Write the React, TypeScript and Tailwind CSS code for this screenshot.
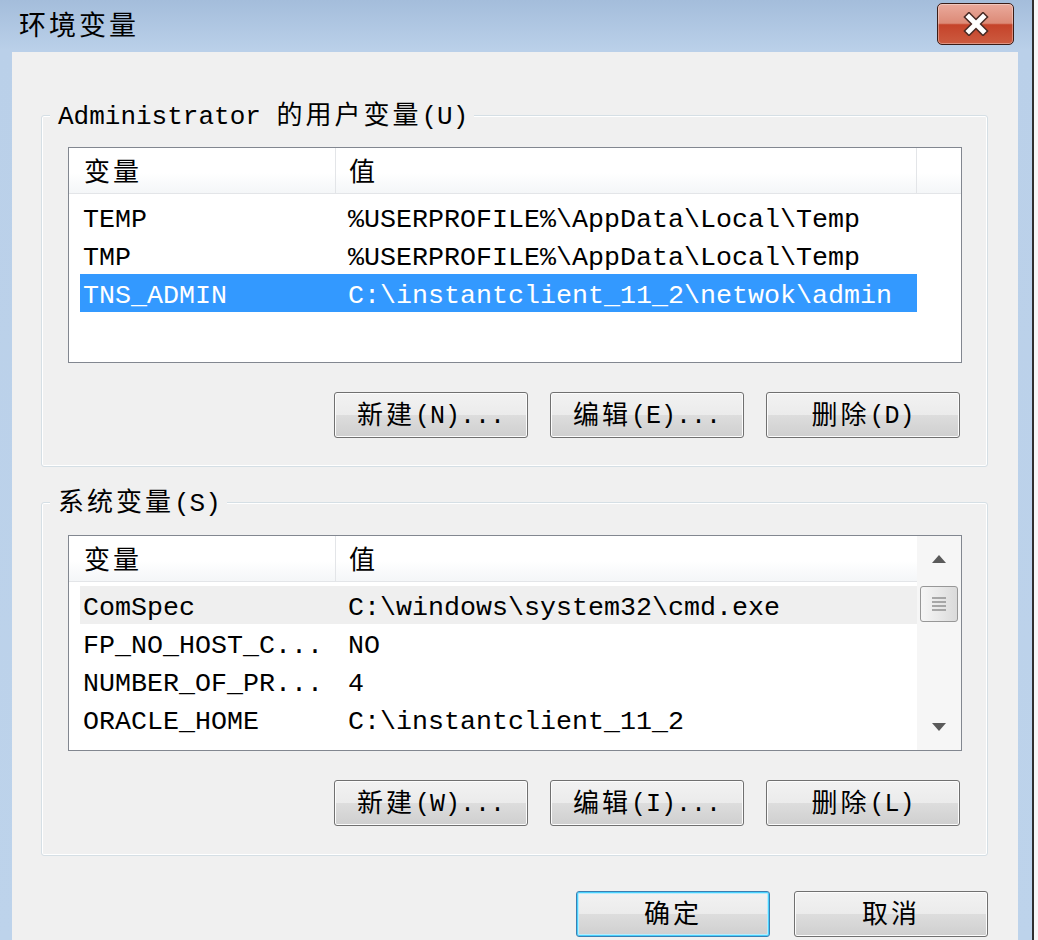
import React from "react";

type Row = { name: string; value: string; state?: "selected" | "hover" };

const userVars: Row[] = [
  { name: "TEMP", value: "%USERPROFILE%\\AppData\\Local\\Temp" },
  { name: "TMP", value: "%USERPROFILE%\\AppData\\Local\\Temp" },
  { name: "TNS_ADMIN", value: "C:\\instantclient_11_2\\netwok\\admin", state: "selected" },
];

const systemVars: Row[] = [
  { name: "ComSpec", value: "C:\\windows\\system32\\cmd.exe", state: "hover" },
  { name: "FP_NO_HOST_C...", value: "NO" },
  { name: "NUMBER_OF_PR...", value: "4" },
  { name: "ORACLE_HOME", value: "C:\\instantclient_11_2" },
];

// SimSun-style spacing: CJK glyphs take roughly two Latin cells
const CJK = /([\u3400-\u9fff]+)/;
function Mixed({ text, cjk = "text-[26px] tracking-[3px]" }: { text: string; cjk?: string }) {
  return (
    <>
      {text.split(CJK).map((part, i) =>
        i % 2 === 1 ? (
          <span key={i} className={cjk}>
            {part}
          </span>
        ) : (
          part
        ),
      )}
    </>
  );
}

function Button({ label, isDefault }: { label: string; isDefault?: boolean }) {
  return (
    <button
      className={
        isDefault
          ? "w-[194px] h-[46px] rounded-[3px] border border-[#3c7fb1] bg-[linear-gradient(#f2f2f2,#ebebeb_50%,#dddddd_50%,#cfcfcf)] shadow-[inset_0_0_0_1px_#48d1fd,inset_0_0_0_2px_#b9ecfd] flex items-center justify-center pt-[3px] text-black text-[25px] leading-[32px]"
          : "w-[194px] h-[46px] rounded-[3px] border border-[#707070] bg-[linear-gradient(#f2f2f2,#ebebeb_50%,#dddddd_50%,#cfcfcf)] shadow-[inset_0_0_0_1px_#fcfcfc] flex items-center justify-center pt-[3px] text-black text-[25px] leading-[32px]"
      }
    >
      <Mixed text={label} />
    </button>
  );
}

function Triangle({ down }: { down?: boolean }) {
  return (
    <svg width="14" height="8" viewBox="0 0 14 8">
      <polygon points={down ? "0,0 14,0 7,8" : "0,8 14,8 7,0"} fill="#5a5a5a" />
    </svg>
  );
}

function Scrollbar() {
  return (
    <div className="w-[44px] flex flex-col bg-[#f6f6f6]">
      <div className="h-[46px] flex items-center justify-center">
        <Triangle />
      </div>
      <div className="mx-[3px] mt-[4px] h-[36px] rounded-[3px] border border-[#979797] bg-[linear-gradient(90deg,#f6f6f6,#e9e9e9_50%,#dadada)] flex items-center justify-center">
        <svg width="16" height="16" viewBox="0 0 16 16">
          {[2, 6, 10, 14].map((y) => (
            <line key={y} x1="1" y1={y} x2="15" y2={y} stroke="#8a8a8a" strokeWidth="1.4" />
          ))}
        </svg>
      </div>
      <div className="flex-1" />
      <div className="h-[46px] flex items-center justify-center">
        <Triangle down />
      </div>
    </div>
  );
}

function VarList({ rows, scroll }: { rows: Row[]; scroll?: boolean }) {
  return (
    <div className="h-[216px] border border-[#828790] bg-white flex">
      <div className="flex-1 flex flex-col">
        <div className="h-[46px] flex border-b border-[#e3e5e8] bg-[linear-gradient(#ffffff,#ffffff_55%,#f4f6f8)] leading-[32px]">
          <div className="w-[267px] pl-[15px] pt-[7px] flex items-center border-r border-[#e3e5e8]">
            <Mixed text="变量" />
          </div>
          <div
            className={
              scroll
                ? "flex-1 pl-[13px] pt-[7px] flex items-center"
                : "w-[581px] pl-[13px] pt-[7px] flex items-center border-r border-[#e3e5e8]"
            }
          >
            <Mixed text="值" />
          </div>
          {!scroll && <div className="flex-1" />}
        </div>
        <div className="pt-[4px] pl-[11px]">
          {rows.map((r) => (
            <div
              key={r.name}
              className={
                r.state === "selected"
                  ? "w-[837px] h-[38px] pl-[3px] pt-[5px] flex items-center bg-[#3399ff] text-white"
                  : r.state === "hover"
                    ? "w-[837px] h-[38px] pl-[3px] pt-[5px] flex items-center bg-[#efefef]"
                    : "w-[837px] h-[38px] pl-[3px] pt-[5px] flex items-center"
              }
            >
              <span className="w-[265px] whitespace-pre">{r.name}</span>
              <span className="whitespace-pre">{r.value}</span>
            </div>
          ))}
        </div>
      </div>
      {scroll && <Scrollbar />}
    </div>
  );
}

function Group({
  title,
  rows,
  scroll,
  buttons,
  listTop,
  className,
}: {
  title: string;
  rows: Row[];
  scroll?: boolean;
  buttons: string[];
  listTop: string;
  className?: string;
}) {
  return (
    <fieldset
      className={
        "ml-[29px] w-[947px] border border-[#d5dfe5] rounded-[3px] shadow-[inset_0_0_0_1px_#ffffff] " +
        (className ?? "")
      }
    >
      <legend className="ml-[8px] pl-[8px] pr-[6px] pt-[4px] bg-[#f0f0f0] leading-[32px] text-[26px]">
        <Mixed text={title} />
      </legend>
      <div className={"pl-[26px] pr-[25px] " + listTop}>
        <VarList rows={rows} scroll={scroll} />
        <div className="mt-[29px] pr-[2px] flex justify-end gap-[22px]">
          {buttons.map((b) => (
            <Button key={b} label={b} />
          ))}
        </div>
      </div>
    </fieldset>
  );
}

function CloseButton() {
  return (
    <div className="mt-[3px] mr-[18px] w-[77px] h-[42px] rounded-[5px] border border-[#3a1c16] bg-[linear-gradient(#eaaa9c,#dc8a77_48%,#c5432a_52%,#cc5b40)] shadow-[inset_0_0_0_1px_rgba(255,255,255,0.35)] flex items-center justify-center">
      <svg width="28" height="24" viewBox="0 0 28 24">
        <g strokeLinecap="square">
          <line x1="7" y1="5" x2="21" y2="19" stroke="#4a2b25" strokeWidth="8" />
          <line x1="21" y1="5" x2="7" y2="19" stroke="#4a2b25" strokeWidth="8" />
          <line x1="7" y1="5" x2="21" y2="19" stroke="#ffffff" strokeWidth="5" />
          <line x1="21" y1="5" x2="7" y2="19" stroke="#ffffff" strokeWidth="5" />
        </g>
      </svg>
    </div>
  );
}

export default function App() {
  return (
    <div className="w-[1038px] h-[940px] overflow-hidden flex bg-white text-black text-[26.67px] font-['Liberation_Mono','Noto_Sans_CJK_SC',monospace]">
      <div className="w-[1032px] h-full flex flex-col bg-[linear-gradient(#a4bddb,#bad0e9_50px,#bdd3eb)]">
        <div className="h-[52px] flex justify-between">
          <div className="pl-[19px] pt-[12px] leading-[32px] text-[27px] tracking-[3px]">环境变量</div>
          <CloseButton />
        </div>
        <div className="flex-1 flex">
          <div className="ml-[12px] w-[1006px] bg-[#f0f0f0] pt-[45px]">
            <Group
              title="Administrator 的用户变量(U)"
              rows={userVars}
              buttons={["新建(N)...", "编辑(E)...", "删除(D)"]}
              listTop="pt-[14px] pb-[28px]"
            />
            <Group
              title="系统变量(S)"
              rows={systemVars}
              scroll
              buttons={["新建(W)...", "编辑(I)...", "删除(L)"]}
              listTop="pt-[15px] pb-[29px]"
              className="mt-[17px]"
            />
            <div className="mt-[35px] pr-[30px] flex justify-end gap-[24px]">
              <Button label="确定" isDefault />
              <Button label="取消" />
            </div>
          </div>
        </div>
      </div>
      <div className="w-[2px] h-full bg-[#2f2f2f]" />
      <div className="flex-1 h-full bg-[#f7f7f7]" />
    </div>
  );
}
